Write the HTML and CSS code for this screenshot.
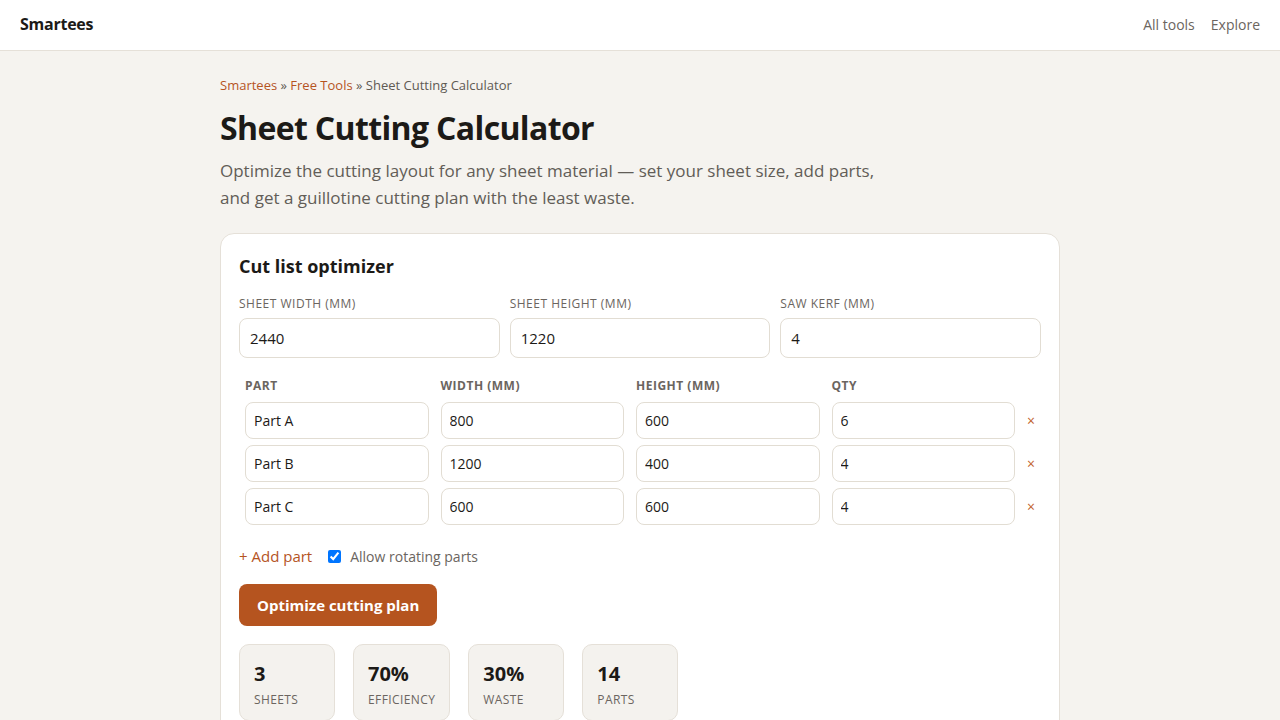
FILE: index.html
```html
<!DOCTYPE html>
<html lang="en">
<head>
    <meta charset="UTF-8">
    <meta name="viewport" content="width=device-width, initial-scale=1.0">
    <title>Sheet Cutting Calculator — Smartees</title>
    <link rel="stylesheet" href="styles.css">
</head>
<body>
    <div class="topbar">
        <a class="brand" href="#">Smartees</a>
        <nav class="nav">
            <a href="#">All tools</a>
            <a href="#">Explore</a>
        </nav>
    </div>

    <main class="page">
        <div class="crumbs">
            <a href="#">Smartees</a> » <a href="#">Free Tools</a> » Sheet Cutting Calculator
        </div>
        <h1>Sheet Cutting Calculator</h1>
        <p class="lead">Optimize the cutting layout for any sheet material — set your sheet size, add parts, and get a guillotine cutting plan with the least waste.</p>

        <section class="card">
            <h2>Cut list optimizer</h2>

            <div class="sheet-fields">
                <label class="field">
                    <span class="field-label">Sheet width (mm)</span>
                    <input type="text" value="2440">
                </label>
                <label class="field">
                    <span class="field-label">Sheet height (mm)</span>
                    <input type="text" value="1220">
                </label>
                <label class="field">
                    <span class="field-label">Saw kerf (mm)</span>
                    <input type="text" value="4">
                </label>
            </div>

            <div class="parts">
                <div class="parts-head">Part</div>
                <div class="parts-head">Width (mm)</div>
                <div class="parts-head">Height (mm)</div>
                <div class="parts-head">Qty</div>
                <div></div>

                <input class="part-input" type="text" value="Part A">
                <input class="part-input" type="text" value="800">
                <input class="part-input" type="text" value="600">
                <input class="part-input" type="text" value="6">
                <button class="remove">×</button>

                <input class="part-input" type="text" value="Part B">
                <input class="part-input" type="text" value="1200">
                <input class="part-input" type="text" value="400">
                <input class="part-input" type="text" value="4">
                <button class="remove">×</button>

                <input class="part-input" type="text" value="Part C">
                <input class="part-input" type="text" value="600">
                <input class="part-input" type="text" value="600">
                <input class="part-input" type="text" value="4">
                <button class="remove">×</button>
            </div>

            <div class="part-actions">
                <a class="add-part" href="#">+ Add part</a>
                <label class="rotate">
                    <input type="checkbox" checked>
                    Allow rotating parts
                </label>
            </div>

            <button class="primary">Optimize cutting plan</button>

            <div class="stats">
                <div class="stat">
                    <div class="stat-value">3</div>
                    <div class="stat-label">Sheets</div>
                </div>
                <div class="stat">
                    <div class="stat-value">70%</div>
                    <div class="stat-label">Efficiency</div>
                </div>
                <div class="stat">
                    <div class="stat-value">30%</div>
                    <div class="stat-label">Waste</div>
                </div>
                <div class="stat">
                    <div class="stat-value">14</div>
                    <div class="stat-label">Parts</div>
                </div>
            </div>
        </section>
    </main>
</body>
</html>
```

FILE: styles.css
```css
* {
    box-sizing: border-box;
}
body {
    margin: 0;
    background: #f5f3ef;
    color: #1c1a17;
    font-family: "Open Sans", "Liberation Sans", sans-serif;
}
a {
    text-decoration: none;
}

/* top bar */
.topbar {
    height: 51px;
    background: #fff;
    border-bottom: 1px solid #e5e0d8;
    display: flex;
    align-items: center;
    justify-content: space-between;
    padding: 0 20px 2px;
}
.brand {
    color: #1c1a17;
    font-weight: 700;
    font-size: 16px;
    letter-spacing: -0.25px;
}
.nav {
    display: flex;
    gap: 16px;
}
.nav a {
    color: #6b6560;
    font-size: 14px;
}

/* page */
.page {
    width: 840px;
    margin: 0 auto;
    padding-top: 24px;
}
.crumbs {
    font-size: 13px;
    line-height: 20px;
    color: #5f5a54;
}
.crumbs a {
    color: #b5541f;
}
h1 {
    font-size: 32px;
    line-height: 40px;
    font-weight: 700;
    margin: 13px 0 0;
    letter-spacing: -0.64px;
}
.lead {
    font-size: 17px;
    line-height: 27px;
    color: #625d57;
    margin: 9px 0 0;
    max-width: 670px;
}

/* card */
.card {
    margin-top: 22px;
    background: #fff;
    border: 1px solid #e5e0d8;
    border-radius: 14px;
    padding: 20px 18px 18px;
}
.card h2 {
    font-size: 18px;
    line-height: 24px;
    font-weight: 700;
    margin: 0;
}
.sheet-fields {
    display: grid;
    grid-template-columns: repeat(3, 1fr);
    gap: 10px;
    margin-top: 17px;
}
.field {
    display: flex;
    flex-direction: column;
    gap: 7px;
}
.field-label {
    font-size: 12px;
    line-height: 16px;
    letter-spacing: 0.5px;
    text-transform: uppercase;
    color: #6b6560;
    padding-top: 1px;
    margin-bottom: -1px;
}
.field input,
.part-input {
    width: 100%;
    border: 1px solid #e2ddd3;
    border-radius: 8px;
    background: #fff;
    font-family: inherit;
    color: #1c1a17;
    outline: none;
}
.field input {
    height: 40px;
    font-size: 15px;
    padding: 0 10px;
}

/* parts table */
.parts {
    display: grid;
    grid-template-columns: repeat(4, 183.5px) 8px;
    column-gap: 12px;
    row-gap: 6px;
    padding: 0 6px;
    margin-top: 19px;
    align-items: center;
}
.parts-head {
    font-size: 12px;
    line-height: 16px;
    font-weight: 700;
    letter-spacing: 0.5px;
    text-transform: uppercase;
    color: #6b6560;
    padding-top: 1px;
    margin-bottom: 2px;
}
.part-input {
    height: 37px;
    font-size: 14px;
    padding: 0 8px;
}
.remove {
    border: none;
    background: none;
    padding: 0;
    color: #c2612d;
    font-size: 14px;
    cursor: pointer;
    font-family: inherit;
}

.part-actions {
    display: flex;
    align-items: center;
    gap: 16px;
    margin-top: 20px;
}
.add-part {
    color: #b5541f;
    font-size: 15px;
    line-height: 22px;
}
.rotate {
    display: flex;
    align-items: center;
    gap: 9px;
    font-size: 14px;
    color: #6b6560;
}
.rotate input {
    margin: 0;
    width: 13px;
    height: 13px;
}

.primary {
    margin-top: 17px;
    height: 42px;
    padding: 0 18px;
    border: none;
    border-radius: 8px;
    background: #b5541f;
    color: #fff;
    font-family: inherit;
    font-size: 15px;
    font-weight: 700;
    cursor: pointer;
}

/* stats */
.stats {
    display: flex;
    gap: 18px;
    margin-top: 18px;
}
.stat {
    min-width: 96px;
    background: #f4f2ee;
    border: 1px solid #e5e0d8;
    border-radius: 10px;
    padding: 16px 14px 12px;
}
.stat-value {
    font-size: 20px;
    line-height: 26px;
    font-weight: 700;
}
.stat-label {
    margin-top: 5px;
    font-size: 12px;
    line-height: 16px;
    letter-spacing: 0.4px;
    text-transform: uppercase;
    color: #6b6560;
}
```
